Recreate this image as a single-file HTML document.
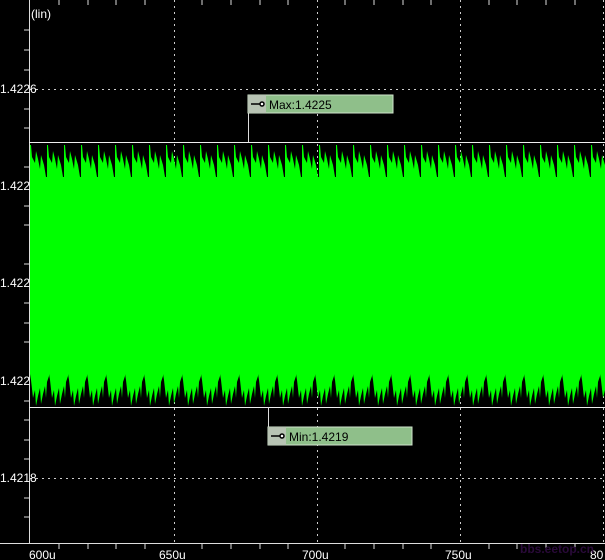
<!DOCTYPE html><html><head><style>
body{margin:0;background:#000;width:605px;height:560px;overflow:hidden;font-family:"Liberation Sans",sans-serif}
svg{position:absolute;left:0;top:0}
</style></head><body>
<svg width="605" height="560" viewBox="0 0 605 560">
<defs>
<pattern id="top" x="30" y="143" width="17" height="40" patternUnits="userSpaceOnUse">
<path d="M0 2 L1 2 L2 14 L5 20 L6 8 L8 16 L10 26 L11 12 L14 22 L16 34 L17 34 L17 40 L0 40Z" fill="#00ff00"/>
</pattern>
<pattern id="bot" x="30" y="368" width="19" height="40" patternUnits="userSpaceOnUse">
<path d="M0 0 L19 0 L19 8 L17 14 L16 30 L15 18 L13 26 L11 36 L10 20 L8 28 L6 38 L5 22 L3 30 L1 12 L0 6Z" fill="#00ff00"/>
</pattern>
</defs>
<g stroke="#ccc" stroke-dasharray="2 4" stroke-width="1">
<line x1="30" y1="89.5" x2="605" y2="89.5"/>
<line x1="30" y1="478.5" x2="605" y2="478.5"/>
<line x1="174.5" y1="0" x2="174.5" y2="543"/>
<line x1="317.5" y1="0" x2="317.5" y2="543"/>
<line x1="460.5" y1="0" x2="460.5" y2="543"/>
<line x1="603.5" y1="0" x2="603.5" y2="543"/>
</g>
<rect x="30" y="178" width="575" height="192" fill="#00ff00"/>
<rect x="30" y="143" width="575" height="40" fill="url(#top)"/>
<rect x="30" y="368" width="575" height="40" fill="url(#bot)"/>
<line x1="29.5" y1="0" x2="29.5" y2="543" stroke="#ddd"/>
<line x1="0" y1="543.5" x2="605" y2="543.5" stroke="#ddd"/>
<line x1="29" y1="142.5" x2="605" y2="142.5" stroke="#eee"/>
<line x1="29" y1="407.5" x2="605" y2="407.5" stroke="#eee"/>
<line x1="248.5" y1="113" x2="248.5" y2="142" stroke="#ddd"/>
<line x1="268.5" y1="445" x2="268.5" y2="407" stroke="#ddd"/>
<g stroke="#ddd">
<path d="M24 30H29M24 50H29M24 70H29M24 109H29M24 128H29M24 167H29M24 206H29M24 225H29M24 264H29M24 303H29M24 323H29M24 342H29M24 401H29M24 420H29M24 440H29M24 459H29M24 498H29M24 517H29"/>
<path d="M59 543V549M88 543V549M116 543V549M145 543V549M202 543V549M231 543V549M260 543V549M288 543V549M345 543V549M374 543V549M403 543V549M431 543V549M489 543V549M517 543V549M546 543V549M575 543V549"/>
<path d="M59 0V5M88 0V5M116 0V5M145 0V5M202 0V5M231 0V5M260 0V5M288 0V5M345 0V5M374 0V5M403 0V5M431 0V5M489 0V5M517 0V5M546 0V5M575 0V5"/>
</g>
<rect x="248" y="95" width="145" height="18" fill="#8fbf8a" stroke="#cfe3cc"/>
<rect x="248" y="95" width="18" height="18" fill="#b8c4b4"/>
<rect x="268" y="427" width="144" height="18" fill="#8fbf8a" stroke="#cfe3cc"/>
<rect x="268" y="427" width="18" height="18" fill="#b8c4b4"/>
<g stroke="#000" stroke-width="1.5" fill="#fff"><path d="M251 104H262M271 436H282"/><circle cx="262" cy="104" r="2"/><circle cx="282" cy="436" r="2"/></g>
<g font-size="12" fill="#fff">
<text x="31" y="18">(lin)</text>
<text x="0" y="93">1.4226</text>
<text x="0" y="190">1.422</text>
<text x="0" y="287">1.422</text>
<text x="0" y="385">1.422</text>
<text x="0" y="482">1.4218</text>
<text x="29" y="559">600u</text>
<text x="159" y="559">650u</text>
<text x="302" y="559">700u</text>
<text x="445" y="559">750u</text>
<text x="590" y="559">80</text>
</g>
<text x="269" y="109" font-size="12" fill="#000">Max:1.4225</text>
<text x="289" y="441" font-size="12" fill="#000">Min:1.4219</text>
<text x="520" y="553" font-size="12" font-weight="bold" fill="#2a0a3a">bbs.eetop.cn</text>
</svg>
</body></html>
